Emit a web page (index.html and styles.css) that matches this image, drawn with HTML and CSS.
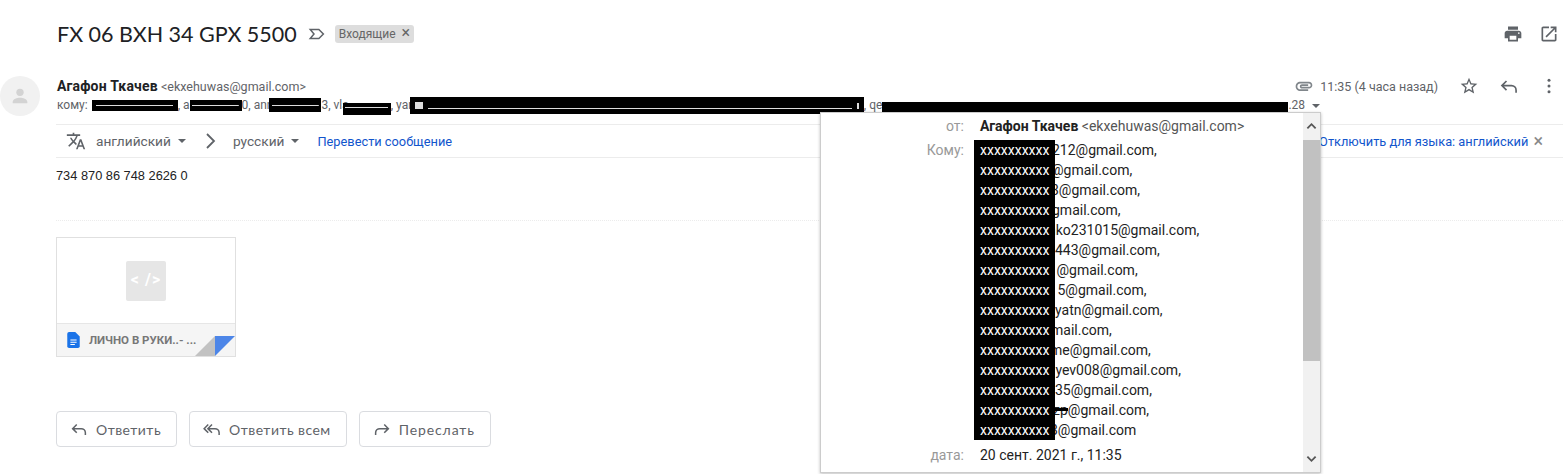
FILE: index.html
```html
<!DOCTYPE html>
<html lang="ru">
<head>
    <meta charset="UTF-8">
    <title>FX 06 BXH 34 GPX 5500</title>
    <link rel="stylesheet" href="styles.css">
</head>
<body>
    <div class="mail">
        <div class="subject-row">
            <h1 class="subject">FX 06 BXH 34 GPX 5500</h1>
            <svg class="tag-icon" viewBox="0 0 24 24"><path d="M3 6h11.5l6 6-6 6H3l5-6z"/></svg>
            <span class="label">Входящие <span class="label-x">×</span></span>
            <div class="top-actions">
                <svg class="icon" viewBox="0 0 24 24"><path d="M19 8H5c-1.66 0-3 1.34-3 3v6h4v4h12v-4h4v-6c0-1.66-1.34-3-3-3zm-3 11H8v-5h8v5zm3-7c-.55 0-1-.45-1-1s.45-1 1-1 1 .45 1 1-.45 1-1 1zm-1-9H6v4h12V3z"/></svg>
                <svg class="icon" viewBox="0 0 24 24"><path d="M19 19H5V5h7V3H5c-1.11 0-2 .9-2 2v14c0 1.1.89 2 2 2h14c1.1 0 2-.9 2-2v-7h-2v7zM14 3v2h3.59l-9.83 9.83 1.41 1.41L19 6.41V10h2V3h-7z"/></svg>
            </div>
        </div>

        <div class="message">
            <div class="avatar">
                <svg viewBox="0 0 24 24"><circle cx="12" cy="8" r="4"/><path d="M4 20v-1.5C4 15.5 9 14 12 14s8 1.5 8 4.5V20z"/></svg>
            </div>
            <div class="message-main">
                <div class="sender-row">
                    <span class="sender-name">Агафон Ткачев</span>
                    <span class="sender-mail">&lt;ekxehuwas@gmail.com&gt;</span>
                    <div class="sender-meta">
                        <svg class="clip-icon" viewBox="0 0 24 24"><path d="M2 12.5C2 9.46 4.46 7 7.5 7H18c2.21 0 4 1.79 4 4s-1.79 4-4 4H9.5C8.12 15 7 13.88 7 12.5S8.12 10 9.5 10H17v2H9.41c-.55 0-.55 1 0 1H18c1.1 0 2-.9 2-2s-.9-2-2-2H7.5C5.57 9 4 10.57 4 12.5S5.57 16 7.5 16H17v2H7.5C4.46 18 2 15.54 2 12.5z"/></svg>
                        <span class="time">11:35 (4 часа назад)</span>
                        <svg class="meta-icon star" viewBox="0 0 24 24"><path d="M22 9.24l-7.19-.62L12 2 9.19 8.63 2 9.24l5.46 4.73L5.82 21 12 17.27 18.18 21l-1.63-7.03L22 9.24zM12 15.4l-3.76 2.27 1-4.28-3.32-2.88 4.38-.38L12 6.1l1.71 4.04 4.38.38-3.32 2.88 1 4.28L12 15.4z"/></svg>
                        <svg class="meta-icon line-icon reply" viewBox="0 0 24 24"><path d="M9 6l-5.500 5.500L9 17M3.500 11.500H15a5.500 5.500 0 0 1 5.500 5.500v3"/></svg>
                        <svg class="meta-icon more" viewBox="0 0 24 24"><circle cx="12" cy="5" r="1.800"/><circle cx="12" cy="12" r="1.800"/><circle cx="12" cy="19" r="1.800"/></svg>
                    </div>
                </div>
                <div class="to-row">кому: <span class="mask mask-1"></span>, a<span class="mask mask-2"></span>0, ann<span class="mask mask-3"></span>3, vla<span class="mask mask-4"></span>, yan<span class="mask mask-5"></span>, qe<span class="mask mask-6"></span>.28<span class="caret to-caret"></span></div>

                <div class="translate-bar">
                    <svg class="translate-icon" viewBox="0 0 24 24"><path d="M12.87 15.07l-2.54-2.51.03-.03c1.740-1.940 2.980-4.170 3.710-6.530H17V4h-7V2H8v2H1v1.990h11.170C11.500 7.920 10.440 9.750 9 11.350 8.070 10.320 7.300 9.190 6.690 8h-2c.73 1.630 1.730 3.170 2.980 4.560l-5.090 5.020L4 19l5-5 3.110 3.110.76-2.040zM18.500 10h-2L12 22h2l1.120-3h4.750L21 22h2l-4.500-12zm-2.620 7l1.620-4.330L19.120 17h-3.240z"/></svg>
                    <span class="lang">английский</span><span class="caret"></span>
                    <svg class="chevron" viewBox="0 0 12 16"><path d="M2 1l7 7-7 7"/></svg>
                    <span class="lang lang-to">русский</span><span class="caret"></span>
                    <a class="link translate-link">Перевести сообщение</a>
                    <a class="link disable-link">Отключить для языка: английский</a>
                    <span class="bar-x">×</span>
                </div>

                <div class="mail-body">734 870 86 748 2626 0</div>

                <div class="attachment">
                    <div class="attachment-preview"><span class="code-badge">&lt; /&gt;</span></div>
                    <div class="attachment-foot">
                        <svg class="doc-icon" viewBox="0 0 14 18"><path d="M2 0h7l5 5v11a2 2 0 0 1-2 2H2a2 2 0 0 1-2-2V2a2 2 0 0 1 2-2z"/><path class="doc-lines" d="M3.500 9h7M3.500 11.500h7M3.500 14h5"/></svg>
                        <span class="attachment-name">ЛИЧНО В РУКИ..- ...</span>
                        <span class="fold-grey"></span>
                        <span class="fold-blue"></span>
                    </div>
                </div>

                <div class="actions">
                    <button class="action-btn">
                        <svg class="line-icon" viewBox="0 0 24 24"><path d="M9 6l-5.500 5.500L9 17M3.500 11.500H15a5.500 5.500 0 0 1 5.500 5.500v3"/></svg>Ответить
                    </button>
                    <button class="action-btn">
                        <svg class="line-icon" viewBox="0 0 24 24"><path d="M7 6l-5.500 5.500L7 17M12 6l-5.500 5.500L12 17M6.500 11.500H16a5.500 5.500 0 0 1 5.500 5.500v3"/></svg>Ответить всем
                    </button>
                    <button class="action-btn forward-btn">
                        <svg class="line-icon" viewBox="0 0 24 24"><path d="M15 6l5.500 5.500L15 17M20.500 11.500H9a5.500 5.500 0 0 0-5.500 5.500v3"/></svg>Переслать
                    </button>
                </div>
            </div>
        </div>
    </div>

    <div class="details">
        <div class="details-list">
            <div class="details-row">
                <div class="details-key">от:</div>
                <div class="details-val"><b>Агафон Ткачев</b> <span class="details-mail">&lt;ekxehuwas@gmail.com&gt;</span></div>
            </div>
            <div class="details-row details-to">
                <div class="details-key">Кому:</div>
                <div class="details-val">
                    <div class="addr"><span class="addr-mask cut-3">xxxxxxxxxx</span>212@gmail.com,</div>
                    <div class="addr"><span class="addr-mask cut-4">xxxxxxxxxx</span>@gmail.com,</div>
                    <div class="addr"><span class="addr-mask cut-4">xxxxxxxxxx</span>3@gmail.com,</div>
                    <div class="addr"><span class="addr-mask cut-3">xxxxxxxxxx</span>gmail.com,</div>
                    <div class="addr"><span class="addr-mask cut-7">xxxxxxxxxx</span>nko231015@gmail.com,</div>
                    <div class="addr"><span class="addr-mask">xxxxxxxxxx</span>443@gmail.com,</div>
                    <div class="addr"><span class="addr-mask cut-2">xxxxxxxxxx</span> @gmail.com,</div>
                    <div class="addr"><span class="addr-mask cut-1">xxxxxxxxxx</span> 5@gmail.com,</div>
                    <div class="addr"><span class="addr-mask">xxxxxxxxxx</span>yatn@gmail.com,</div>
                    <div class="addr"><span class="addr-mask cut-4">xxxxxxxxxx</span>mail.com,</div>
                    <div class="addr"><span class="addr-mask cut-5">xxxxxxxxxx</span>me@gmail.com,</div>
                    <div class="addr"><span class="addr-mask cut-3">xxxxxxxxxx</span> yev008@gmail.com,</div>
                    <div class="addr"><span class="addr-mask">xxxxxxxxxx</span>35@gmail.com,</div>
                    <div class="addr"><span class="addr-mask cut-2">xxxxxxxxxx</span>zp@gmail.com,</div>
                    <div class="addr"><span class="addr-mask cut-5">xxxxxxxxxx</span>3@gmail.com</div>
                </div>
            </div>
            <div class="details-row details-date">
                <div class="details-key">дата:</div>
                <div class="details-val">20 сент. 2021 г., 11:35</div>
            </div>
        </div>
        <span class="mask-stroke"></span>
        <div class="scrollbar">
            <svg class="scroll-arrow" viewBox="0 0 12 8"><path d="M1.500 6L6 1.500 10.500 6"/></svg>
            <div class="scroll-thumb"></div>
            <svg class="scroll-arrow" viewBox="0 0 12 8"><path d="M1.500 2L6 6.500 10.500 2"/></svg>
        </div>
    </div>
</body>
</html>
```

FILE: styles.css
```css
body {
    margin: 0;
    background-color: #fff;
    color: #222;
    font-family: Roboto, "Liberation Sans", sans-serif;
    overflow: hidden;
    height: 474px;
    position: relative;
}

svg {
    display: block;
    flex: none;
}

.mail {
    display: flex;
    flex-direction: column;
}

/* Subject */
.subject-row {
    display: flex;
    align-items: center;
    height: 68px;
    padding-left: 57px;
}

.subject {
    margin: 0;
    font-family: Lato, Roboto, sans-serif;
    font-size: 21.500px;
    font-weight: 400;
    color: #202124;
}

.tag-icon {
    width: 18px;
    height: 18px;
    margin-left: 11px;
    fill: none;
    stroke: #5f6368;
    stroke-width: 2;
}

.label {
    margin-left: 9px;
    padding: 0 4px 0 4px;
    height: 18px;
    line-height: 18px;
    font-size: 12px;
    background-color: #ddd;
    border-radius: 3px;
    color: #666;
    white-space: nowrap;
}

.label-x {
    margin-left: 3px;
    font-size: 16px;
    line-height: 14px;
}

.top-actions {
    display: flex;
    gap: 16px;
    margin-left: auto;
    margin-right: 4px;
}

.icon {
    width: 20px;
    height: 20px;
    fill: #5f6368;
}

/* Message */
.message {
    display: flex;
}

.avatar {
    flex: none;
    width: 40px;
    height: 40px;
    margin: 8px 16px 0 0;
    border-radius: 50%;
    background-color: #f1f1f1;
    display: flex;
    align-items: center;
    justify-content: center;
}

.avatar svg {
    width: 22px;
    height: 22px;
    fill: #d3d3d3;
}

.message-main {
    flex: 1;
    min-width: 0;
}

.sender-row {
    display: flex;
    align-items: center;
    height: 22px;
    margin-top: 7px;
    padding-left: 1px;
}

.sender-name {
    font-size: 14px;
    font-weight: 700;
    letter-spacing: 0.2px;
    color: #202124;
}

.sender-mail {
    margin-left: 3px;
    font-size: 12.500px;
    color: #5f6368;
}

.sender-meta {
    display: flex;
    align-items: center;
    margin-left: auto;
    font-size: 12.500px;
    color: #5f6368;
}

.clip-icon {
    width: 20px;
    height: 20px;
    fill: #80868b;
}

.time {
    margin-left: 6px;
}

.meta-icon {
    width: 20px;
    height: 20px;
    fill: #5f6368;
}

.line-icon {
    fill: none;
    stroke: #5f6368;
    stroke-width: 2;
}

.star {
    margin-left: 21px;
}

.reply {
    margin-left: 20px;
}

.more {
    margin-left: 20px;
    margin-right: 4px;
}

.to-row {
    height: 16px;
    padding-left: 1px;
    line-height: 16px;
    font-size: 12px;
    color: #5f6368;
    white-space: nowrap;
}

.mask {
    display: inline-block;
    background-color: #000;
    background-image: linear-gradient(#dcdcdc, #dcdcdc);
    background-repeat: no-repeat;
    background-size: 90% 1px;
    background-position: center;
}

.mask-1 {
    width: 86px;
    height: 11px;
    margin-left: 1px;
    vertical-align: -2px;
}

.mask-2 {
    width: 52px;
    height: 11px;
    vertical-align: -2px;
}

.mask-3 {
    width: 52px;
    height: 14px;
    margin-left: -4px;
    vertical-align: -3px;
}

.mask-4 {
    width: 48px;
    height: 12px;
    margin-left: -6px;
    vertical-align: -6px;
    background-position: center 4px;
}

.mask-5 {
    width: 454px;
    height: 17px;
    margin-left: -5px;
    vertical-align: -5px;
    background-image: linear-gradient(#ddd, #ddd), linear-gradient(#ddd, #ddd), linear-gradient(#ddd, #ddd);
    background-size: 424px 1px, 8px 7px, 2px 6px;
    background-position: 18px 11px, 5px 5px, 447px 6px;
}

.mask-6 {
    width: 406px;
    height: 11px;
    vertical-align: -4px;
    background-image: none;
}

.caret {
    display: inline-block;
    width: 0;
    height: 0;
    margin-left: 7px;
    border-left: 4px solid transparent;
    border-right: 4px solid transparent;
    border-top: 4px solid #5f6368;
    vertical-align: middle;
}

.translate-bar {
    display: flex;
    align-items: center;
    height: 32px;
    margin-top: 11px;
    padding-left: 10px;
    border-top: 1px solid #ececec;
    border-bottom: 1px solid #ececec;
}

.translate-icon {
    width: 20px;
    height: 20px;
    fill: #5f6368;
}

.lang {
    margin-left: 10px;
    font-size: 13.700px;
    color: #5f6368;
}

.lang-to {
    margin-left: 7px;
}

.chevron {
    width: 12px;
    height: 16px;
    margin-left: 19px;
    margin-right: 9px;
    fill: none;
    stroke: #5f6368;
    stroke-width: 1.800;
}

.link {
    color: #15c;
    font-size: 12.800px;
}

.translate-link {
    margin-left: 18px;
}

.disable-link {
    margin-left: auto;
}

.bar-x {
    margin: 0 20px 0 5px;
    font-size: 18px;
    color: #888;
    line-height: 18px;
}

.mail-body {
    padding-top: 10px;
    height: 52px;
    font-family: "Liberation Sans", sans-serif;
    font-size: 12.800px;
    color: #222;
    border-bottom: 1px dotted #ececec;
}

/* Attachment card */
.attachment {
    width: 178px;
    height: 118px;
    margin-top: 16px;
    border: 1px solid #e0e0e0;
    display: flex;
    flex-direction: column;
}

.attachment-preview {
    flex: 1;
    display: flex;
    align-items: center;
    justify-content: center;
    border-bottom: 1px solid #e6e6e6;
}

.code-badge {
    width: 40px;
    height: 40px;
    line-height: 38px;
    text-align: center;
    background-color: #e6e6e6;
    border-radius: 2px;
    color: #fff;
    font-size: 16px;
    font-weight: 700;
    letter-spacing: 1px;
}

.attachment-foot {
    position: relative;
    display: flex;
    align-items: center;
    height: 32px;
    padding-left: 10px;
    background-color: #f5f5f5;
}

.doc-icon {
    width: 13px;
    height: 16px;
    fill: #1a73e8;
}

.doc-lines {
    fill: none;
    stroke: #fff;
    stroke-width: 1.200;
}

.attachment-name {
    margin-left: 9px;
    font-size: 11.500px;
    font-weight: 700;
    color: #777;
    white-space: nowrap;
}

.fold-grey {
    position: absolute;
    right: 20px;
    bottom: 0;
    border-style: solid;
    border-width: 0 0 20px 20px;
    border-color: transparent transparent #c2c2c2 transparent;
}

.fold-blue {
    position: absolute;
    right: 0;
    bottom: 0;
    border-style: solid;
    border-width: 20px 20px 0 0;
    border-color: #4d86e8 transparent transparent transparent;
}

/* Reply buttons */
.actions {
    display: flex;
    gap: 12px;
    margin-top: 54px;
}

.action-btn {
    display: flex;
    align-items: center;
    gap: 8px;
    height: 36px;
    padding: 0 15px 0 13px;
    background-color: #fff;
    border: 1px solid #dadce0;
    border-radius: 4px;
    font-family: Lato, Roboto, sans-serif;
    font-size: 14px;
    letter-spacing: 0.45px;
    color: #5f6368;
}

.forward-btn {
    letter-spacing: 0.9px;
}

.action-btn svg {
    width: 18px;
    height: 18px;
}

/* Details popup */
.details {
    position: absolute;
    left: 820px;
    top: 112px;
    width: 499px;
    height: 359px;
    display: flex;
    background-color: #fff;
    border: 1px solid #ccc;
    box-shadow: 0 1px 3px rgba(0, 0, 0, 0.25);
    font-size: 14px;
}

.details-list {
    flex: 1;
    padding-top: 3px;
}

.details-row {
    display: flex;
    line-height: 20px;
}

.details-to {
    margin-top: 4px;
}

.details-date {
    margin-top: 5px;
}

.details-key {
    flex: none;
    width: 143px;
    text-align: right;
    color: #999;
}

.details-val {
    padding-left: 16px;
    color: #222;
}

.details-mail {
    color: #555;
}

.addr {
    white-space: pre;
}

.addr-mask {
    position: relative;
    z-index: 1;
    display: inline-block;
    width: 75px;
    height: 20px;
    margin-left: -6px;
    padding-left: 6px;
    background-color: #000;
    color: #fff;
    overflow: hidden;
    vertical-align: top;
}

.cut-1 { margin-right: -1px; }
.cut-2 { margin-right: -2px; }
.cut-3 { margin-right: -3px; }
.cut-4 { margin-right: -4px; }
.cut-5 { margin-right: -5px; }
.cut-7 { margin-right: -7px; }

.mask-stroke {
    position: absolute;
    left: 234px;
    top: 295px;
    width: 13px;
    height: 3px;
    background-color: #000;
}

.scrollbar {
    flex: none;
    width: 17px;
    display: flex;
    flex-direction: column;
    background-color: #f1f1f1;
}

.scroll-arrow {
    width: 17px;
    height: 27px;
    padding: 9px 3px;
    box-sizing: border-box;
    fill: none;
    stroke: #555;
    stroke-width: 2;
}

.scroll-thumb {
    height: 221px;
    background-color: #c1c1c1;
    margin-bottom: auto;
}
```
